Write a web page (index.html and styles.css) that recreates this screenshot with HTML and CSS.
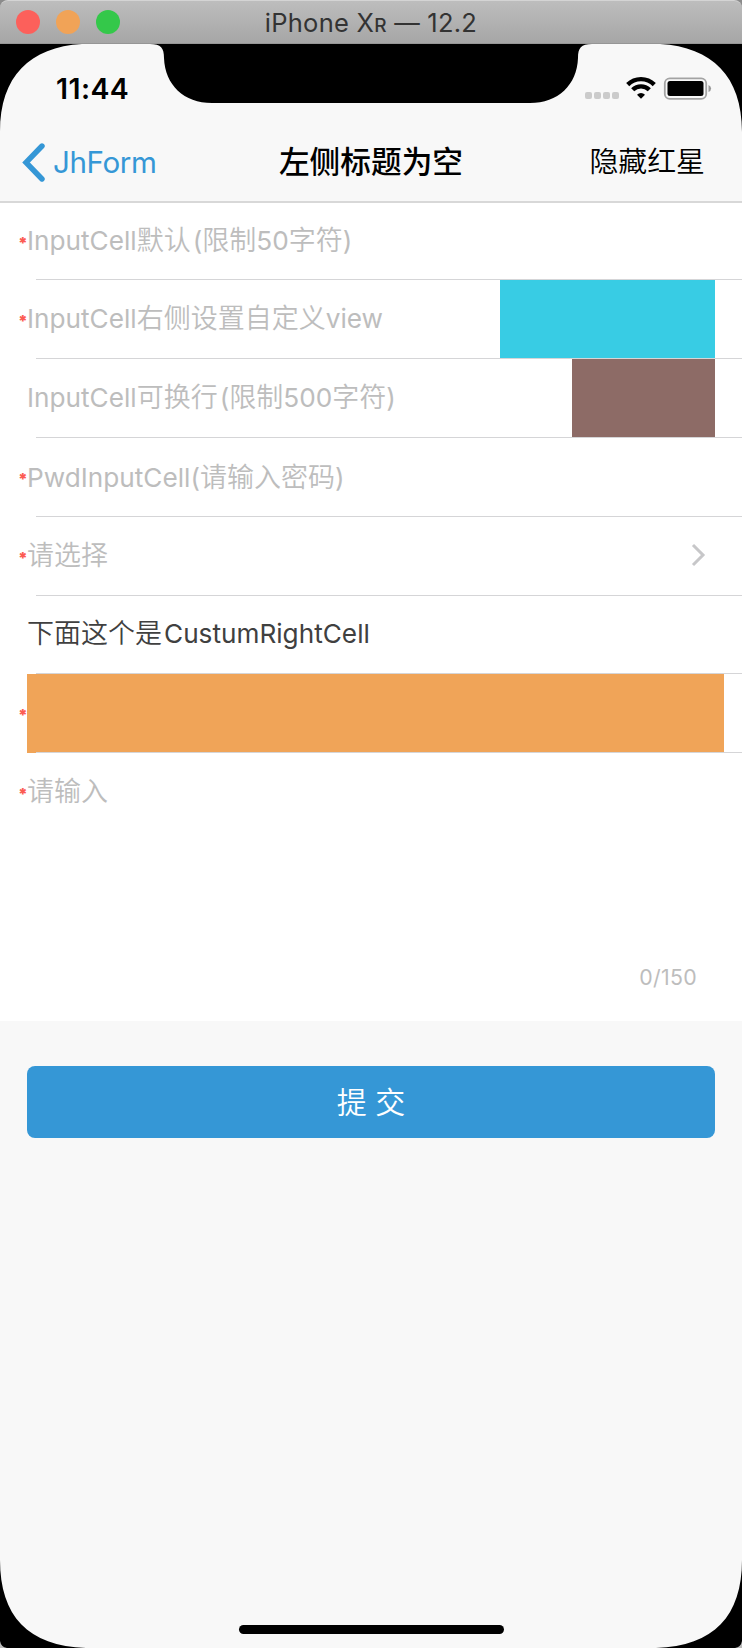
FILE: index.html
```html
<!DOCTYPE html>
<html lang="zh-CN">
<head>
<meta charset="utf-8">
<title>iPhone XR</title>
<link rel="stylesheet" href="styles.css">
</head>
<body>
<div class="window">
  <header class="titlebar">
    <div class="lights"><i class="light red"></i><i class="light amber"></i><i class="light green"></i></div>
    <div class="window-title">iPhone X<span class="small-cap">R</span> — 12.2</div>
  </header>
  <main class="screen">
    <div class="status">
      <div class="time">11:44</div>
      <svg class="status-icons" width="132" height="26" viewBox="0 0 132 26">
        <g fill="#cbcbcb"><rect x="4" y="16" width="7" height="7" rx="2"/><rect x="13" y="16" width="7" height="7" rx="2"/><rect x="22" y="16" width="7" height="7" rx="2"/><rect x="31" y="16" width="7" height="7" rx="2"/></g>
        <g fill="none" stroke="#000" stroke-width="4.400">
          <path d="M46.7 8.6a19 19 0 0 1 26.6 0"/>
          <path d="M51.700 13.800a11.800 11.800 0 0 1 16.600 0"/>
        </g>
        <path d="M60 22.800l-4-4.100a5.800 5.800 0 0 1 8 0z"/>
        <rect x="83.800" y="2.300" width="41.400" height="20.600" rx="5" fill="none" stroke="#a3a3a3" stroke-width="1.800"/>
        <rect x="86.500" y="5" width="36" height="15" rx="2.500"/>
        <path d="M127.500 9q2.600 1 2.600 3.500T127.500 16z" fill="#999"/>
      </svg>
    </div>
    <nav class="nav">
      <a class="back"><svg width="23" height="39" viewBox="0 0 23 39"><path d="M20 3L4 19.500L20 36" fill="none" stroke="#3597d6" stroke-width="5.400" stroke-linecap="round" stroke-linejoin="miter"/></svg><span>JhForm</span></a>
      <h1 class="nav-title">左侧标题为空</h1>
      <a class="nav-action">隐藏红星</a>
    </nav>
    <section class="form">
      <div class="row first"><b class="star">*</b><span class="label"><span class="en">InputCell</span>默认<span class="en paren">(</span>限制<span class="en">50</span>字符<span class="en">)</span></span></div>
      <div class="row"><b class="star">*</b><span class="label"><span class="en">InputCell</span>右侧设置自定义<span class="en">view</span></span><span class="swatch cyan"></span></div>
      <div class="row"><b class="star"></b><span class="label"><span class="en">InputCell</span>可换行<span class="en paren">(</span>限制<span class="en">500</span>字符<span class="en">)</span></span><span class="swatch brown"></span></div>
      <div class="row"><b class="star">*</b><span class="label drop"><span class="en">PwdInputCell(</span>请输入密码<span class="en">)</span></span></div>
      <div class="row"><b class="star">*</b><span class="label">请选择</span><svg class="chevron" width="16" height="24" viewBox="0 0 16 24"><path d="M2 2L12 12L2 22" fill="none" stroke="#c7c7c9" stroke-width="3"/></svg></div>
      <div class="row short"><b class="star"></b><span class="label dark">下面这个是<span class="en">CustumRightCell</span></span></div>
      <div class="row"><b class="star">*</b><span class="swatch orange"></span></div>
      <div class="row area"><div class="area-head"><b class="star">*</b><span class="label">请输入</span></div><div class="counter">0/150</div></div>
    </section>
    <button class="submit">提 交</button>
    <div class="home"></div>
    <svg class="bezel" width="742" height="1604" viewBox="0 0 742 1604">
      <path d="M0 0H82C30 3 0 32 0 88Z"/>
      <path d="M742 0H660C712 3 742 32 742 88Z"/>
      <path d="M150 0C161 0 164 4 164 14C165 41 184 59 212 59H530C558 59 577 41 578 14C578 4 581 0 592 0Z"/>
      <path d="M0 1516C0 1572 28 1602 86 1604H0Z"/>
      <path d="M742 1516C742 1572 714 1602 656 1604H742Z"/>
      <path d="M0 1597Q1 1603 7 1604H0Z" fill="#bbb"/>
      <path d="M742 1597Q741 1603 735 1604H742Z" fill="#bbb"/>
    </svg>
  </main>
</div>
</body>
</html>
```
FILE: styles.css
```css
* { box-sizing: border-box; }
body { margin: 0; background: #8b8b8b; font-family: Inter, "Noto Sans CJK SC", sans-serif; }
.window { width: 742px; height: 1648px; display: flex; flex-direction: column; overflow: hidden; }
.titlebar { position: relative; height: 44px; flex: none; display: flex; align-items: center; justify-content: center; background: linear-gradient(#bdbdbd, #a6a6a6); border-top: 1px solid #d4d4d4; border-bottom: 1px solid #969696; border-radius: 8px 8px 0 0; }
.lights { position: absolute; left: 16px; top: 9px; display: flex; gap: 16px; }
.light { width: 24px; height: 24px; border-radius: 50%; }
.red { background: #fc605b; }
.amber { background: #f1a357; }
.green { background: #34c84a; }
.window-title { padding-top: 3px; font-size: 25.500px; letter-spacing: 0.250px; line-height: 39px; color: #333; white-space: nowrap; }
.small-cap { font-size: 19px; font-weight: 500; }
.screen { position: relative; flex: 1; display: flex; flex-direction: column; background: #f8f8f8; }
.status { height: 79px; flex: none; display: flex; justify-content: space-between; padding: 31px 29px 0 56px; }
.time { font-size: 28.500px; line-height: 28px; font-weight: 600; letter-spacing: 0.400px; }
.status-icons { margin-top: 1px; }
.nav { height: 80px; flex: none; display: grid; grid-template-columns: 1fr auto 1fr; align-items: center; padding: 0 22px; border-bottom: 2px solid #d8d8d8; }
.back { display: flex; align-items: center; gap: 8px; color: #3597d6; font-size: 29.600px; letter-spacing: -0.400px; }
.nav-title { margin: 0; font-size: 30.700px; line-height: 40px; font-weight: 500; }
.nav-action { justify-self: end; margin-right: 15px; font-size: 28.900px; line-height: 40px; font-weight: 350; }
.form { background: #fff; flex: none; }
.row { position: relative; height: 79px; display: flex; align-items: center; }
.row::after { content: ""; position: absolute; left: 36px; right: 0; bottom: 0; height: 1px; background: #d5d5d7; }
.first { height: 77px; }
.short { height: 78px; }
.star { width: 27px; padding-left: 18px; flex: none; font-size: 16px; line-height: 20px; height: 18px; color: #fc5b52; font-weight: 900; }
.label { flex: 1; font-size: 27px; line-height: 40px; color: #bdbdbd; white-space: nowrap; font-weight: 350; padding-bottom: 1px; }
.drop { padding-bottom: 0; }
.en { font-size: 26.200px; font-weight: 400; }
.paren { margin-left: 2px; }
.dark { color: #404040; padding-bottom: 3px; }
.dark .en { margin-left: 2px; }
.swatch { align-self: stretch; }
.cyan { width: 215px; margin-right: 27px; background: #38cce4; }
.brown { width: 143px; margin-right: 27px; background: #8d6b66; }
.orange { width: 697px; background: #f0a458; }
.chevron { margin: 0 35px 3px 0; }
.area { height: 268px; display: flex; flex-direction: column; align-items: stretch; justify-content: space-between; padding-bottom: 28px; }
.area::after { display: none; }
.area-head { height: 79px; display: flex; align-items: center; }
.counter { align-self: flex-end; margin-right: 45px; font-size: 21.300px; letter-spacing: 0.300px; line-height: 32px; color: #bdbdbd; }
.submit { margin: 45px 27px 0; height: 72px; flex: none; border: 0; border-radius: 8px; background: #3597d6; color: #fff; font: 350 30px/72px Inter, "Noto Sans CJK SC", sans-serif; padding: 0; }
.home { width: 265px; height: 9px; border-radius: 5px; background: #000; margin: auto auto 14px; }
.bezel { position: absolute; left: 0; top: 0; pointer-events: none; }
```
